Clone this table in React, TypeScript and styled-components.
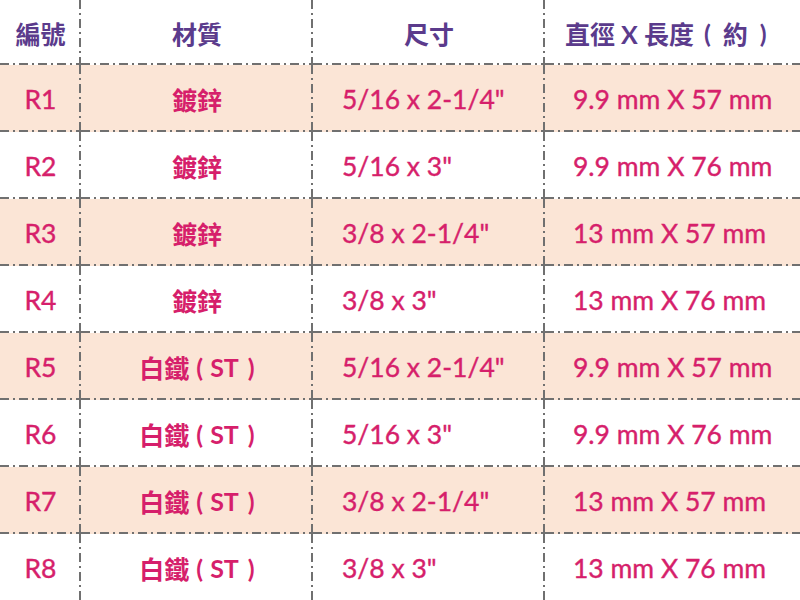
import { FC } from "react";
import styled, { createGlobalStyle } from "styled-components";

interface Row {
  code: string;
  material: string;
  note?: string;
  size: string;
  dims: string;
}

const rows: Row[] = [
  { code: "R1", material: "鍍鋅", size: "5/16 x 2-1/4\"", dims: "9.9 mm X 57 mm" },
  { code: "R2", material: "鍍鋅", size: "5/16 x 3\"", dims: "9.9 mm X 76 mm" },
  { code: "R3", material: "鍍鋅", size: "3/8 x 2-1/4\"", dims: "13 mm X 57 mm" },
  { code: "R4", material: "鍍鋅", size: "3/8 x 3\"", dims: "13 mm X 76 mm" },
  { code: "R5", material: "白鐵", note: "ST", size: "5/16 x 2-1/4\"", dims: "9.9 mm X 57 mm" },
  { code: "R6", material: "白鐵", note: "ST", size: "5/16 x 3\"", dims: "9.9 mm X 76 mm" },
  { code: "R7", material: "白鐵", note: "ST", size: "3/8 x 2-1/4\"", dims: "13 mm X 57 mm" },
  { code: "R8", material: "白鐵", note: "ST", size: "3/8 x 3\"", dims: "13 mm X 76 mm" },
];

const LINE = "#707070";

const GlobalStyle = createGlobalStyle`
  html, body {
    margin: 0;
    padding: 0;
    background: #ffffff;
  }
  body {
    font-family: Lato, "Noto Sans CJK TC", sans-serif;
  }
`;

// "( 約 )" style bracket with loose spacing, as in the source sheet
const Bracketed: FC<{ text: string; lead: number; inner: number; tail: number }> = ({
  text,
  lead,
  inner,
  tail,
}) => (
  <>
    <StyledGap $w={lead} />
    (
    <StyledGap $w={inner} />
    {text}
    <StyledGap $w={tail} />)
  </>
);

const App: FC = () => {
  return (
    <>
      <GlobalStyle />
      <StyledTable>
        <StyledHead $align="center">編號</StyledHead>
        <StyledHead $align="center">材質</StyledHead>
        <StyledHead $align="center">尺寸</StyledHead>
        <StyledHead $align="left" $last>
          直徑 X 長度
          <Bracketed text="約" lead={10} inner={12} tail={12} />
        </StyledHead>
        {rows.map((row, i) => {
          const shaded = i % 2 === 0;
          const bottom = i < rows.length - 1;
          return [
            <StyledCell key={row.code + "a"} $shaded={shaded} $bottom={bottom} $align="center">
              {row.code}
            </StyledCell>,
            <StyledCell key={row.code + "b"} $shaded={shaded} $bottom={bottom} $align="center" $cjk>
              {row.material}
              {row.note && <Bracketed text={row.note} lead={7} inner={7} tail={9} />}
            </StyledCell>,
            <StyledCell key={row.code + "c"} $shaded={shaded} $bottom={bottom} $align="left" $pad={29}>
              {row.size}
            </StyledCell>,
            <StyledCell key={row.code + "d"} $shaded={shaded} $bottom={bottom} $align="left" $pad={28} $last>
              {row.dims}
            </StyledCell>,
          ];
        })}
      </StyledTable>
    </>
  );
};

export default App;

const hLine = `repeating-linear-gradient(to right, ${LINE} 0 9px, transparent 9px 13px, ${LINE} 13px 15px, transparent 15px 19px)`;
const vLine = `repeating-linear-gradient(to bottom, ${LINE} 0 9px, transparent 9px 13px, ${LINE} 13px 15px, transparent 15px 19px)`;

const StyledTable = styled.div`
  display: grid;
  grid-template-columns: 81px 232px 232px 1fr;
  grid-template-rows: 65px repeat(8, 67px);
  width: 800px;
  height: 600px;
  overflow: hidden;
`;

const StyledGap = styled.span<{ $w: number }>`
  display: inline-block;
  width: ${(p) => p.$w}px;
`;

const cellLines = (last?: boolean, bottom?: boolean) => {
  const layers: string[] = [];
  const sizes: string[] = [];
  const positions: string[] = [];
  if (!last) {
    layers.push(vLine);
    sizes.push("2px 100%");
    positions.push("right top");
  }
  if (bottom) {
    layers.push(hLine);
    sizes.push("100% 2px");
    positions.push("left bottom");
  }
  if (!layers.length) return "";
  return `
    background-image: ${layers.join(", ")};
    background-size: ${sizes.join(", ")};
    background-position: ${positions.join(", ")};
    background-repeat: no-repeat;
  `;
};

const StyledHead = styled.div<{ $align: "left" | "center"; $last?: boolean }>`
  display: flex;
  align-items: center;
  justify-content: ${(p) => (p.$align === "center" ? "center" : "flex-start")};
  padding-left: ${(p) => (p.$align === "left" ? "20px" : "0")};
  font-family: Lato, "Noto Sans CJK TC", sans-serif;
  font-size: 25px;
  font-weight: 700;
  color: #5b3b8c;
  background-color: #ffffff;
  white-space: pre;
  ${(p) => cellLines(p.$last, true)}
`;

const StyledCell = styled.div<{
  $shaded: boolean;
  $bottom: boolean;
  $align: "left" | "center";
  $pad?: number;
  $last?: boolean;
  $cjk?: boolean;
}>`
  display: flex;
  align-items: center;
  justify-content: ${(p) => (p.$align === "center" ? "center" : "flex-start")};
  padding-left: ${(p) => (p.$pad ? `${p.$pad}px` : "0")};
  font-family: Lato, "Noto Sans CJK TC", sans-serif;
  font-size: ${(p) => (p.$cjk ? "25px" : "26.5px")};
  font-weight: ${(p) => (p.$cjk ? 700 : 400)};
  -webkit-text-stroke: ${(p) => (p.$cjk ? "0" : "0.4px")};
  color: #d61f6b;
  background-color: ${(p) => (p.$shaded ? "#fbe5d6" : "#ffffff")};
  white-space: pre;
  ${(p) => cellLines(p.$last, p.$bottom)}
`;
